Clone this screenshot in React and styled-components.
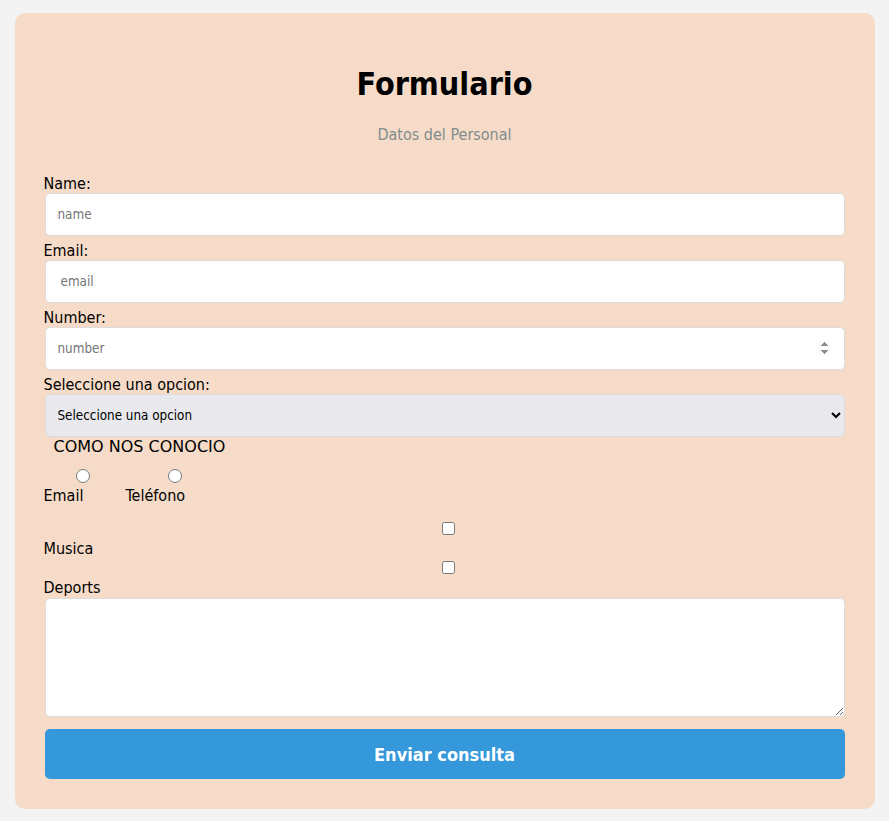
import React from "react";
import styled, { createGlobalStyle } from "styled-components";

const FONT = `Tahoma, "DejaVu Sans Condensed", "DejaVu Sans", sans-serif`;

const Global = createGlobalStyle`
  html, body { margin: 0; padding: 0; }
  body {
    background: #f3f3f3;
    font-family: ${FONT};
    color: #000;
  }
  * { box-sizing: border-box; }
`;

const Card = styled.div`
  width: 860px;
  margin: 13px auto 12px;
  background: #f6dcc8;
  border-radius: 10px;
  padding: 30px 29px 30px 29px;
`;

const Title = styled.h1`
  margin: 22px 0 0;
  font-size: 32px;
  line-height: 39px;
  font-weight: bold;
  text-align: center;
`;

const Subtitle = styled.p`
  margin: 21px 0 0;
  font-size: 16px;
  line-height: 19px;
  color: #7f8c8d;
  text-align: center;
`;

const Form = styled.form`
  margin-top: 30px;
  display: flex;
  flex-direction: column;
`;

const Label = styled.label`
  display: block;
  font-size: 16px;
  line-height: 19px;
`;

const TextInput = styled.input`
  display: block;
  width: 800px;
  height: 43px;
  margin: 0 0 5px 1px;
  padding: 0 12px 0 ${(p) => p.$padLeft || 12}px;
  border: 1px solid #dcdcdc;
  border-radius: 5px;
  background: #fff;
  font-family: ${FONT};
  font-size: 13.33px;
  outline: none;
  &::placeholder { color: #757575; }
  &::-webkit-inner-spin-button { opacity: 1; }
`;

const Select = styled.select`
  display: block;
  width: 800px;
  height: 43px;
  margin: 0 0 0 1px;
  padding: 0 8px;
  border: 1px solid #dcdcdc;
  border-radius: 5px;
  background: #e9e9ed;
  font-family: ${FONT};
  font-size: 13.33px;
  color: #000;
`;

const Legend = styled.div`
  margin-left: 10px;
  font-family: "DejaVu Sans", sans-serif;
  font-size: 16px;
  line-height: 19px;
`;

const RadioGroup = styled.div`
  display: grid;
  grid-template-columns: 82px auto;
  justify-content: start;
`;

const RadioOption = styled.label`
  display: flex;
  flex-direction: column;
  align-items: flex-start;
  font-size: 16px;
  line-height: 19px;
`;

const Radio = styled.input.attrs({ type: "radio", name: "conocio" })`
  margin: 13px 0 3px ${(p) => p.$offset}px;
  width: 14px;
  height: 14px;
`;

const Check = styled.input.attrs({ type: "checkbox" })`
  display: block;
  margin: ${(p) => p.$top}px 0 4px 398px;
  width: 13px;
  height: 13px;
`;

const TextArea = styled.textarea`
  display: block;
  width: 800px;
  height: 119px;
  margin: 1px 0 0 1px;
  border: 1px solid #dcdcdc;
  border-radius: 5px;
  background: #fff;
  resize: both;
`;

const Button = styled.button`
  display: block;
  width: 800px;
  height: 50px;
  margin: 12px 0 0 1px;
  border: none;
  border-radius: 5px;
  background: #3498db;
  color: #fff;
  font-family: ${FONT};
  font-size: 18px;
  font-weight: bold;
  cursor: pointer;
`;

export default function App() {
  return (
    <>
      <Global />
      <Card>
        <Title>Formulario</Title>
        <Subtitle>Datos del Personal</Subtitle>
        <Form onSubmit={(e) => e.preventDefault()}>
          <Label htmlFor="name">Name:</Label>
          <TextInput id="name" type="text" placeholder="name" />
          <Label htmlFor="email">Email:</Label>
          <TextInput id="email" type="email" placeholder="email" $padLeft={15} />
          <Label htmlFor="number">Number:</Label>
          <TextInput id="number" type="number" placeholder="number" />
          <Label htmlFor="opcion">Seleccione una opcion:</Label>
          <Select id="opcion" defaultValue="">
            <option value="">Seleccione una opcion</option>
            <option value="1">Opcion 1</option>
            <option value="2">Opcion 2</option>
          </Select>
          <Legend>COMO NOS CONOCIO</Legend>
          <RadioGroup>
            <RadioOption>
              <Radio $offset={32} />
              Email
            </RadioOption>
            <RadioOption>
              <Radio $offset={42} />
              Teléfono
            </RadioOption>
          </RadioGroup>
          <Check $top={17} />
          <Label>Musica</Label>
          <Check $top={3} />
          <Label>Deports</Label>
          <TextArea />
          <Button type="submit">Enviar consulta</Button>
        </Form>
      </Card>
    </>
  );
}
